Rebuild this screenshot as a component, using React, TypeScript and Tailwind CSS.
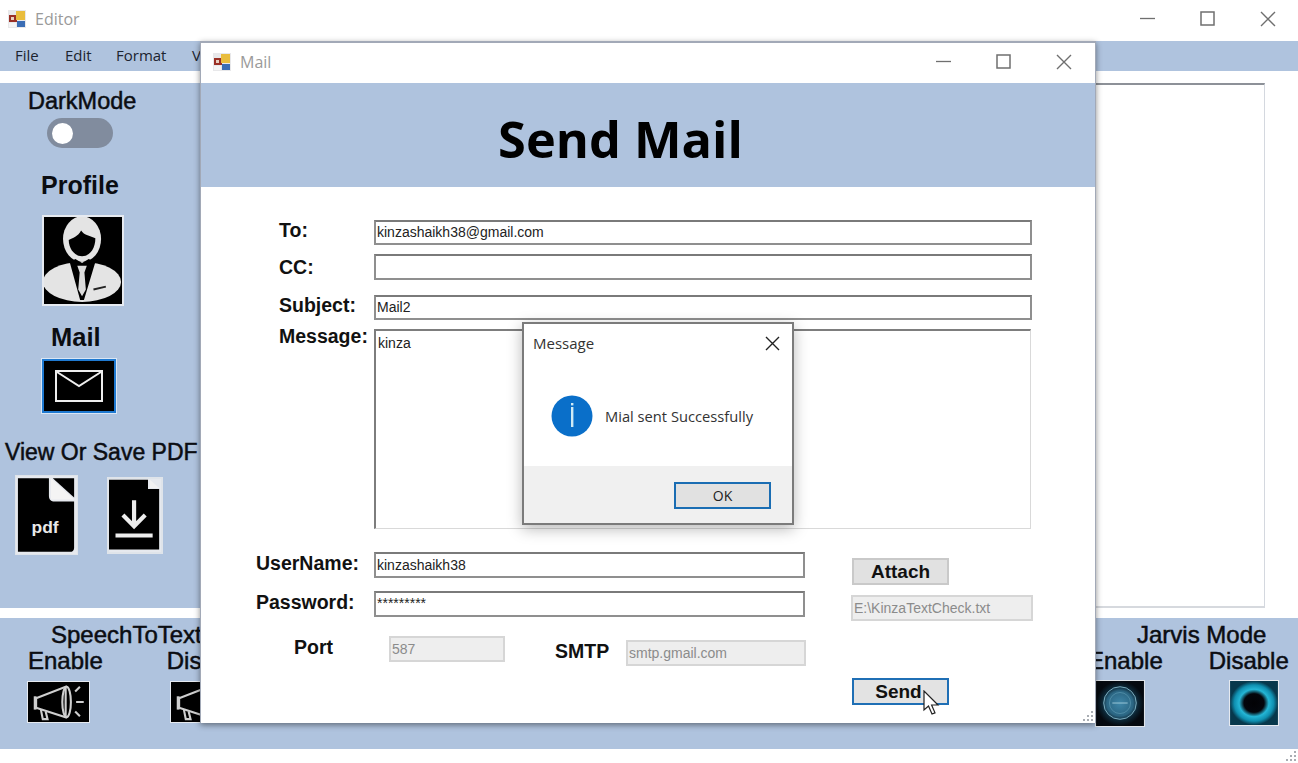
import type { ReactNode } from 'react'

const SANS = "font-['Liberation_Sans',Arial,sans-serif]"
const UI = "font-['Open_Sans','Noto_Sans',sans-serif]"
const HEAVY = '[-webkit-text-stroke:0.5px_#0b0d12]'

function AppIcon() {
  return (
    <svg width="20" height="20" viewBox="0 0 20 20" className="shrink-0">
      <rect x="1" y="1" width="18" height="18" fill="#e8e8ea" />
      <rect x="2" y="6" width="8" height="7" fill="#9a2f25" />
      <rect x="9" y="2" width="9" height="9" fill="#e9bd3d" />
      <rect x="10" y="12" width="8" height="6" fill="#3b6db5" />
      <rect x="2" y="14" width="7" height="4" fill="#f4f4f4" />
      <rect x="4" y="8" width="3" height="3" fill="#e8d0c0" />
    </svg>
  )
}

function WindowButtons() {
  return (
    <div className="flex items-center gap-[45px] text-[#6f6f6f]">
      <svg width="15" height="15" viewBox="0 0 15 15">
        <path d="M0 7.5H15" stroke="currentColor" strokeWidth="1.3" />
      </svg>
      <svg width="15" height="15" viewBox="0 0 15 15">
        <rect x="1" y="1" width="13" height="13" fill="none" stroke="currentColor" strokeWidth="1.5" />
      </svg>
      <svg width="16" height="16" viewBox="0 0 16 16">
        <path d="M1 1L15 15M15 1L1 15" stroke="currentColor" strokeWidth="1.4" />
      </svg>
    </div>
  )
}

function Grip() {
  return (
    <svg width="12" height="12" viewBox="0 0 12 12" fill="#a9adb3">
      <rect x="9" y="1" width="2" height="2" />
      <rect x="5" y="5" width="2" height="2" />
      <rect x="9" y="5" width="2" height="2" />
      <rect x="1" y="9" width="2" height="2" />
      <rect x="5" y="9" width="2" height="2" />
      <rect x="9" y="9" width="2" height="2" />
    </svg>
  )
}

function SideLabel({ children, className = '' }: { children: ReactNode; className?: string }) {
  return <div className={`${SANS} whitespace-nowrap text-[#0b0d12] ${className}`}>{children}</div>
}

function ProfileIcon() {
  return (
    <svg width="82" height="91" viewBox="0 0 82 91" className="border-2 border-[#e6eaf0] bg-black">
      <ellipse cx="40" cy="68" rx="41" ry="21" fill="#e4e4e4" />
      <ellipse cx="40" cy="23" rx="20" ry="24" fill="#e4e4e4" />
      <path d="M26 24C30 22 36 20 39 14C42 19 49 20 54 22C54 33 48 41 40 41C32 41 26 33 26 24Z" fill="#000" />
      <path d="M27 47L33 44L40 48L47 44L54 47L42 87H38Z" fill="#000" />
      <path d="M35 51H45L42.5 58L44 76L40 83L36 76L37.5 58Z" fill="#dcdcdc" />
      <path d="M52 76L65 73" stroke="#222" strokeWidth="2" />
    </svg>
  )
}

function MailIcon() {
  return (
    <div className="flex h-[54px] w-[74px] items-center justify-center border-2 border-[#1f79d0] bg-black outline outline-1 outline-[#d9e6f5]">
      <svg width="48" height="32" viewBox="0 0 48 32" fill="none" stroke="#eee" strokeWidth="2">
        <rect x="1" y="1" width="46" height="30" />
        <path d="M2 2L24 16L46 2" />
      </svg>
    </div>
  )
}

function PdfIcon() {
  return (
    <svg width="63" height="80" viewBox="0 0 63 80" className="border border-[#dfe4ea] bg-[#e6e9ee]">
      <path d="M2 2H34V20C34 24 36 26 40 26H60V74C60 77 58 78 56 78H2Z" fill="#000" />
      <path d="M36 2L60 24H36Z" fill="#f4f4f4" />
      <path d="M38 2H60V22Z" fill="#000" />
      <text x="30" y="59" textAnchor="middle" fontFamily="Liberation Sans" fontWeight="700" fontSize="18" fill="#e8e8e8">pdf</text>
    </svg>
  )
}

function SaveIcon() {
  return (
    <svg width="56" height="77" viewBox="0 0 56 77" className="border-2 border-[#dfe4ea] bg-[#e6e9ee]">
      <path d="M0 0H42V10H54V75H0Z" fill="#000" />
      <path d="M44 0L54 9H44Z" fill="#f2f2f2" />
      <path d="M27 22V50M15 38L27 50L39 38" fill="none" stroke="#eee" strokeWidth="4.5" />
      <path d="M7 60H47" stroke="#eee" strokeWidth="4.5" />
    </svg>
  )
}

function SpeakerIcon() {
  return (
    <svg width="63" height="42" viewBox="0 0 63 42" className="border border-[#e6eaf0] bg-black" fill="none" stroke="#cfcfcf" strokeWidth="2.2">
      <path d="M8 17L39 5V37L8 27Z" />
      <ellipse cx="40" cy="21" rx="4.5" ry="16" />
      <path d="M7 15V29" strokeWidth="3" />
      <path d="M13 29L15 39H20L18 31" />
      <path d="M49 10L54 5M50 21H58M49 31L54 36" />
    </svg>
  )
}

function JarvisOn() {
  return (
    <svg width="50" height="47" viewBox="0 0 50 47" className="border border-[#dfe4ea]">
      <defs>
        <radialGradient id="jarvisOn">
          <stop offset="0" stopColor="#3f86a8" />
          <stop offset="0.55" stopColor="#2b6683" />
          <stop offset="0.75" stopColor="#0c2635" />
          <stop offset="1" stopColor="#05090f" />
        </radialGradient>
      </defs>
      <rect width="50" height="47" fill="url(#jarvisOn)" />
      <circle cx="25" cy="23" r="17" fill="none" stroke="#7fb3c4" strokeWidth="1" />
      <circle cx="25" cy="23" r="11" fill="none" stroke="#4e8ba5" strokeWidth="1" />
      <path d="M17 23H33" stroke="#9cc8d8" strokeWidth="1" />
    </svg>
  )
}

function JarvisOff() {
  return (
    <svg width="50" height="46" viewBox="0 0 50 46" className="border border-[#e6eaf0]">
      <defs>
        <radialGradient id="jarvisOff">
          <stop offset="0" stopColor="#020205" />
          <stop offset="0.42" stopColor="#04060c" />
          <stop offset="0.62" stopColor="#24b6d6" />
          <stop offset="0.82" stopColor="#0f8fb0" />
          <stop offset="1" stopColor="#07384c" />
        </radialGradient>
      </defs>
      <rect width="50" height="46" fill="url(#jarvisOff)" />
    </svg>
  )
}

function Field({ value, className = '' }: { value: string; className?: string }) {
  return (
    <div className={`${SANS} flex items-center whitespace-nowrap border-2 border-[#8f8f8f] border-t-[#7a7a7a] bg-white pl-[1px] text-[14px] text-[#222] ${className}`}>
      {value}
    </div>
  )
}

function ReadOnly({ value, className = '' }: { value: string; className?: string }) {
  return (
    <div className={`${SANS} flex items-center whitespace-nowrap border-2 border-[#d6d6d6] bg-[#eeeeee] pl-[1px] text-[14px] text-[#8b8b8b] ${className}`}>
      {value}
    </div>
  )
}

function FormLabel({ children, className = '' }: { children: ReactNode; className?: string }) {
  return <div className={`${SANS} whitespace-nowrap text-[19.5px] font-bold leading-none text-[#111] ${className}`}>{children}</div>
}

function MailWindow() {
  return (
    <div className="absolute left-[200px] top-[41px] z-10 flex h-[682px] w-[896px] flex-col border-t-2 border-l border-r border-[#a2a9b7] bg-white shadow-[0_2px_6px_rgba(0,0,0,0.45)]">
      <div className="flex h-[40px] items-center justify-between pb-[3px] pl-[11px] pr-[23px]">
        <div className={`${UI} flex items-center gap-[8px] text-[16px] text-[#9a9a9a]`}>
          <AppIcon />
          Mail
        </div>
        <WindowButtons />
      </div>
      <div className="flex h-[104px] items-center justify-center bg-[#afc3de] pr-[55px] pt-[8px]">
        <div className={`${UI} text-[50.5px] font-bold leading-none text-black`}>Send Mail</div>
      </div>

      <div className="flex flex-col pl-[78px] pt-[33px]">
        <div className="flex h-[25px] items-start">
          <FormLabel className="w-[95px] pt-[1px]">To:</FormLabel>
          <Field value="kinzashaikh38@gmail.com" className="h-[25px] w-[658px]" />
        </div>
        <div className="mt-[9px] flex h-[26px] items-center">
          <FormLabel className="mt-[2px] w-[95px]">CC:</FormLabel>
          <Field value="" className="h-[26px] w-[658px]" />
        </div>
        <div className="mt-[15px] flex h-[25px] items-start">
          <FormLabel className="-mt-[1px] w-[95px] pt-[2px]">Subject:</FormLabel>
          <Field value="Mail2" className="h-[25px] w-[658px]" />
        </div>
        <div className="mt-[9px] flex h-[200px] items-start">
          <FormLabel className="-mt-[2px] w-[95px]">Message:</FormLabel>
          <div className={`${SANS} h-[200px] w-[657px] border-l-2 border-t-2 border-r border-b border-l-[#7d7d7d] border-t-[#7d7d7d] border-r-[#d9d9d9] border-b-[#d9d9d9] pl-[2px] pt-[2px] text-[14px] text-[#222]`}>
            kinza
          </div>
        </div>
      </div>

      <div className="flex pl-[55px] pt-[23px]">
        <div className="flex w-[596px] flex-col">
          <div className="flex h-[26px] items-center">
            <FormLabel className="-mt-[2px] w-[118px]">UserName:</FormLabel>
            <Field value="kinzashaikh38" className="h-[26px] w-[431px]" />
          </div>
          <div className="mt-[13px] flex h-[26px] items-center">
            <FormLabel className="-mt-[3px] w-[118px]">Password:</FormLabel>
            <Field value="*********" className="h-[26px] w-[431px] items-start" />
          </div>
          <div className="mt-[19px] flex items-start">
            <FormLabel className="ml-[38px] mt-[2px] w-[95px]">Port</FormLabel>
            <ReadOnly value="587" className="h-[26px] w-[116px]" />
            <FormLabel className="ml-[50px] mt-[6px] w-[71px]">SMTP</FormLabel>
            <ReadOnly value="smtp.gmail.com" className="mt-[4px] h-[26px] w-[180px]" />
          </div>
        </div>
        <div className="flex flex-col">
          <button className={`${SANS} mt-[6px] h-[27px] w-[97px] border-2 border-[#c9c9c9] bg-[#e1e1e1] text-[19px] font-bold leading-none text-[#111]`}>
            Attach
          </button>
          <ReadOnly value="E:\KinzaTextCheck.txt" className="-ml-[1px] mt-[10px] h-[26px] w-[182px]" />
          <button className={`${SANS} relative mt-[57px] h-[27px] w-[97px] border-2 border-[#1f6fb5] bg-[#e3e3e3] pr-[4px] text-[19px] font-bold leading-none text-[#111]`}>
            Send
            <svg width="18" height="26" viewBox="0 0 18 26" className="absolute left-[69px] top-[10px]">
              <path d="M1 1V20L5.5 16L9 24L12 22.8L8.6 15H15Z" fill="#fff" stroke="#222" strokeWidth="1.2" />
            </svg>
          </button>
        </div>
      </div>
      <div className="absolute bottom-[1px] right-[1px]">
        <Grip />
      </div>
    </div>
  )
}

function MessageBox() {
  return (
    <div className={`${UI} absolute left-[522px] top-[322px] z-20 flex h-[203px] w-[272px] flex-col border-2 border-[#7b7b7b] bg-white shadow-[0_4px_14px_rgba(0,0,0,0.28)]`}>
      <div className="flex h-[38px] items-center justify-between pl-[9px] pr-[12px] pt-[1px]">
        <span className="text-[15px] text-[#333]">Message</span>
        <svg width="15" height="15" viewBox="0 0 15 15">
          <path d="M1 1L14 14M14 1L1 14" stroke="#222" strokeWidth="1.4" />
        </svg>
      </div>
      <div className="flex h-[104px] items-center pl-[27px] pt-[4px]">
        <svg width="42" height="42" viewBox="0 0 42 42">
          <circle cx="21" cy="21" r="20.5" fill="#0a6fc9" />
          <rect x="20" y="12" width="2.4" height="20" fill="#cfeaf5" />
          <rect x="20" y="8" width="2.4" height="2.4" fill="#cfeaf5" />
        </svg>
        <span className="ml-[12px] whitespace-nowrap text-[14.7px] text-[#333]">Mial sent Successfully</span>
      </div>
      <div className="flex flex-1 items-center justify-end bg-[#f0f0f0] pr-[21px] pt-[2px]">
        <button className="h-[27px] w-[97px] border-2 border-[#1a6db3] bg-[#e1e1e1] text-[14px] text-[#222]">OK</button>
      </div>
    </div>
  )
}

export default function App() {
  return (
    <div className="relative flex h-[763px] w-[1298px] flex-col overflow-hidden bg-white">
      <div className="flex h-[41px] items-center justify-between pb-[4px] pl-[7px] pr-[22px]">
        <div className={`${UI} flex items-center gap-[8px] text-[16px] text-[#9a9a9a]`}>
          <AppIcon />
          Editor
        </div>
        <WindowButtons />
      </div>

      <div className={`${UI} flex h-[30px] items-center bg-[#afc3de] pb-[2px] pl-[15px] text-[15px] text-[#1c2430]`}>
        <span className="w-[50px]">File</span>
        <span className="w-[51px]">Edit</span>
        <span className="w-[76px]">Format</span>
        <span>View</span>
      </div>

      <div className="mt-[12px] flex h-[525px]">
        <div className="flex w-[200px] shrink-0 flex-col bg-[#afc3de]">
          <SideLabel className={`ml-[28px] mt-[6px] text-[23.5px] leading-[25px] ${HEAVY}`}>DarkMode</SideLabel>
          <div className="ml-[47px] mt-[4px] flex h-[30px] w-[66px] items-center rounded-full bg-[#818c9e] pl-[5px]">
            <div className="size-[21px] rounded-full bg-white" />
          </div>
          <SideLabel className="ml-[41px] mt-[23px] text-[25px] font-bold leading-[28px]">Profile</SideLabel>
          <div className="ml-[42px] mt-[16px]">
            <ProfileIcon />
          </div>
          <SideLabel className="ml-[51px] mt-[17px] text-[25.5px] font-bold leading-[28px]">Mail</SideLabel>
          <div className="ml-[42px] mt-[8px]">
            <MailIcon />
          </div>
          <SideLabel className={`ml-[5px] mt-[25px] text-[23px] leading-[28px] ${HEAVY}`}>View Or Save PDF</SideLabel>
          <div className="ml-[15px] mt-[9px] flex items-start gap-[29px]">
            <PdfIcon />
            <div className="mt-[2px]">
              <SaveIcon />
            </div>
          </div>
        </div>
        <div className="w-[1065px] border-r border-b-2 border-t-2 border-r-[#d4d8df] border-b-[#d6d9de] border-t-[#8d9198]" />
      </div>

      <div className="mt-[10px] flex h-[131px] justify-between bg-[#afc3de]">
        <div className={`${SANS} relative flex flex-col text-[24px] leading-[26px] text-[#0b0d12] ${HEAVY}`}>
          <div className="ml-[51px] mt-[4px] whitespace-nowrap">SpeechToText</div>
          <div className="ml-[28px] flex gap-[64px]">
            <span>Enable</span>
            <span>Disable</span>
          </div>
          <div className="ml-[27px] mt-[7px] flex gap-[80px]">
            <SpeakerIcon />
            <SpeakerIcon />
          </div>
        </div>
        <div className={`${SANS} flex w-[203px] flex-col text-[24px] leading-[26px] text-[#0b0d12] ${HEAVY}`}>
          <div className="ml-[42px] mt-[4px] whitespace-nowrap">Jarvis Mode</div>
          <div className="-ml-[7px] flex gap-[46px] whitespace-nowrap">
            <span>Enable</span>
            <span>Disable</span>
          </div>
          <div className="mt-[6px] flex items-start gap-[84px]">
            <JarvisOn />
            <JarvisOff />
          </div>
        </div>
      </div>

      <div className="flex flex-1 items-end justify-end pb-[1px] pr-[1px]">
        <Grip />
      </div>

      <MailWindow />
      <MessageBox />
    </div>
  )
}
